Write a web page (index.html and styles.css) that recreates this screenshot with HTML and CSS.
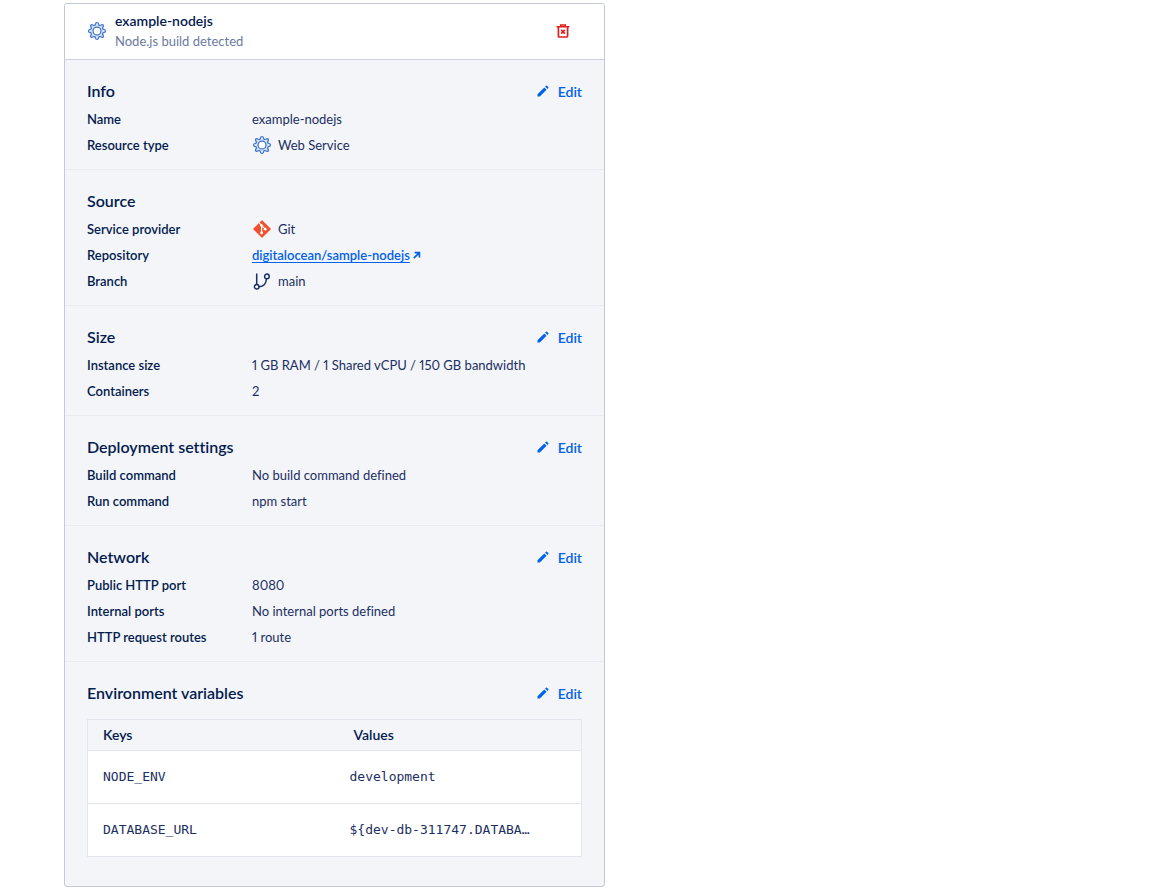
FILE: index.html
```html
<!DOCTYPE html>
<html lang="en">
<head>
    <meta charset="UTF-8">
    <meta name="viewport" content="width=device-width, initial-scale=1.0">
    <title>example-nodejs</title>
    <link rel="stylesheet" href="styles.css">
</head>
<body>
    <!-- Shared icons -->
    <svg class="sprite" aria-hidden="true">
        <symbol id="icon-gear" viewBox="-0.6 -0.6 21.2 21.2">
            <path d="M8.4 2.4Q8.7 1 10 1t1.6 1.4l.4 1.3 1.3.5 1.2-.6q1.2-.8 2 0t0 2l-.7 1.2.5 1.2 1.3.4Q19 8.700 19 10t-1.4 1.6l-1.3.4-.5 1.3.7 1.1q.8 1.200 0 2t-2 0l-1.200-.6-1.300.5-.4 1.300Q11.300 19 10 19t-1.600-1.400L8 16.300l-1.300-.5-1.200.6q-1.200.8-2 0t0-2l.7-1.100-.5-1.300-1.300-.4Q1 11.300 1 10t1.400-1.600L3.700 8l.5-1.200-.7-1.200q-.8-1.200 0-2t2 0l1.200.6L8 3.700z" fill="#d3e3fb" stroke="#3f72c4" stroke-width="1.300" stroke-linejoin="round"/>
            <circle cx="10" cy="10" r="4.200" fill="#fff" stroke="#3f72c4" stroke-width="1.300"/>
        </symbol>
        <symbol id="icon-pencil" viewBox="0 0 12 12">
            <path d="M.5 9.2 7.3 2.4l2.3 2.3-6.8 6.8H.5z" fill="currentColor"/>
            <path d="m8.1 1.6.9-.9q.5-.4 1 0l1.3 1.3q.4.5 0 1l-.9.9z" fill="currentColor"/>
        </symbol>
    </svg>

    <main class="card">
        <header class="card-header">
            <svg class="icon"><use href="#icon-gear"/></svg>
            <div class="card-title">
                <h1>example-nodejs</h1>
                <p>Node.js build detected</p>
            </div>
            <button type="button" class="delete-btn" aria-label="Delete">
                <svg viewBox="0 0 14 14" fill="none" stroke="currentColor">
                    <path d="M.6 2.7h12.8M4.7 2.4V1h4.6v1.4" stroke-width="1.5"/>
                    <path d="M2.4 3v9q0 1 1 1h7.2q1 0 1-1V3" stroke-width="1.7"/>
                    <path d="m5.2 5.9 3.6 3.8M8.8 5.9 5.2 9.7" stroke-width="1.7"/>
                </svg>
            </button>
        </header>

        <section class="section">
            <div class="section-header">
                <h2>Info</h2>
                <button type="button" class="edit-btn"><svg><use href="#icon-pencil"/></svg>Edit</button>
            </div>
            <dl>
                <div class="row"><dt>Name</dt><dd>example-nodejs</dd></div>
                <div class="row"><dt>Resource type</dt><dd><svg class="icon"><use href="#icon-gear"/></svg>Web Service</dd></div>
            </dl>
        </section>

        <section class="section">
            <div class="section-header">
                <h2>Source</h2>
            </div>
            <dl>
                <div class="row">
                    <dt>Service provider</dt>
                    <dd>
                        <svg class="icon" viewBox="0 0 20 20">
                            <rect x="3.6" y="3.6" width="12.8" height="12.8" rx="1" transform="rotate(45 10 10)" fill="#f1502f"/>
                            <path d="M7 3.6 9.6 6.4V14M9.6 6.4l3.6 3.8" fill="none" stroke="#fff" stroke-width="1.2"/>
                            <circle cx="9.6" cy="6.6" r="1.4" fill="#fff"/>
                            <circle cx="9.6" cy="14" r="1.4" fill="#fff"/>
                            <circle cx="13.2" cy="10.2" r="1.4" fill="#fff"/>
                        </svg>
                        Git
                    </dd>
                </div>
                <div class="row">
                    <dt>Repository</dt>
                    <dd>
                        <a href="#" class="repo-link">digitalocean/sample-nodejs</a>
                        <svg class="external" viewBox="0 0 8 8" fill="none" stroke="currentColor" stroke-width="1.7">
                            <path d="M1.6 1.6h4.8v4.8M6.2 1.8.8 7.2"/>
                        </svg>
                    </dd>
                </div>
                <div class="row">
                    <dt>Branch</dt>
                    <dd>
                        <svg class="icon" viewBox="0 0 20 20" fill="none" stroke="#1b2f63" stroke-width="1.5">
                            <path d="M4.7 2.5v10.9M7.2 15.8c4.6-.3 7-3.6 7.3-8"/>
                            <circle cx="4.7" cy="15.7" r="2.3"/>
                            <circle cx="14.9" cy="5.4" r="2.3"/>
                        </svg>
                        main
                    </dd>
                </div>
            </dl>
        </section>

        <section class="section">
            <div class="section-header">
                <h2>Size</h2>
                <button type="button" class="edit-btn"><svg><use href="#icon-pencil"/></svg>Edit</button>
            </div>
            <dl>
                <div class="row"><dt>Instance size</dt><dd>1 GB RAM / 1 Shared vCPU / 150 GB bandwidth</dd></div>
                <div class="row"><dt>Containers</dt><dd>2</dd></div>
            </dl>
        </section>

        <section class="section">
            <div class="section-header">
                <h2>Deployment settings</h2>
                <button type="button" class="edit-btn"><svg><use href="#icon-pencil"/></svg>Edit</button>
            </div>
            <dl>
                <div class="row"><dt>Build command</dt><dd>No build command defined</dd></div>
                <div class="row"><dt>Run command</dt><dd>npm start</dd></div>
            </dl>
        </section>

        <section class="section">
            <div class="section-header">
                <h2>Network</h2>
                <button type="button" class="edit-btn"><svg><use href="#icon-pencil"/></svg>Edit</button>
            </div>
            <dl>
                <div class="row"><dt>Public HTTP port</dt><dd>8080</dd></div>
                <div class="row"><dt>Internal ports</dt><dd>No internal ports defined</dd></div>
                <div class="row"><dt>HTTP request routes</dt><dd>1 route</dd></div>
            </dl>
        </section>

        <section class="section">
            <div class="section-header">
                <h2>Environment variables</h2>
                <button type="button" class="edit-btn"><svg><use href="#icon-pencil"/></svg>Edit</button>
            </div>
            <table class="env-table">
                <thead>
                    <tr><th>Keys</th><th>Values</th></tr>
                </thead>
                <tbody>
                    <tr><td>NODE_ENV</td><td>development</td></tr>
                    <tr><td>DATABASE_URL</td><td>${dev-db-311747.DATABA…</td></tr>
                </tbody>
            </table>
        </section>
    </main>
</body>
</html>
```
FILE: styles.css
```css
* {
    box-sizing: border-box;
    margin: 0;
    padding: 0;
}

body {
    padding: 3px 64px;
    background: #fff;
    color: #1b2f63;
    font-family: Lato, "Liberation Sans", sans-serif;
    font-size: 13px;
    font-variant-numeric: proportional-nums;
    font-variant-ligatures: none;
    line-height: 20px;
}

button {
    border: none;
    background: none;
    font-family: inherit;
    cursor: pointer;
}

.sprite {
    display: none;
}

.icon {
    flex: none;
    width: 20px;
    height: 20px;
}

.card {
    max-width: 541px;
    border: 1px solid #c4c8dc;
    border-radius: 3px;
    background: #f3f5f9;
    overflow: hidden;
}

/* Header */
.card-header {
    display: flex;
    align-items: center;
    gap: 8px;
    padding: 7px 34px 8px 22px;
    background: #fff;
    border-bottom: 1px solid #cdd0e2;
}

.card-title {
    flex: 1;
}

.card-title h1 {
    font-size: 14px;
    font-weight: 600;
    color: #031b4e;
}

.card-title p {
    color: #6b7a9f;
}

.delete-btn {
    display: flex;
    color: #dd1f1f;
}

.delete-btn svg {
    width: 14px;
    height: 14px;
}

/* Sections */
.section {
    padding: 19px 22px 11px;
    border-bottom: 1px solid #e9ebf1;
}

.section:last-child {
    padding-bottom: 29px;
    border-bottom: none;
}

.section-header {
    display: flex;
    align-items: center;
    justify-content: space-between;
    height: 24px;
    margin-bottom: 3px;
}

.section-header h2 {
    font-size: 16px;
    font-weight: 600;
    color: #031b4e;
}

.edit-btn {
    display: flex;
    align-items: center;
    gap: 9px;
    font-size: 14px;
    font-weight: 600;
    color: #0061eb;
}

.edit-btn svg {
    width: 12px;
    height: 12px;
}

.row {
    display: flex;
    align-items: center;
    height: 26px;
}

.row dt {
    flex: none;
    width: 165px;
    font-weight: 600;
    color: #031b4e;
}

.row dd {
    display: flex;
    align-items: center;
    gap: 6px;
}

.repo-link {
    font-weight: 600;
    color: #0061eb;
    text-underline-offset: 2px;
}

.external {
    width: 8px;
    height: 8px;
    margin-left: -3px;
    color: #0061eb;
}

/* Environment variables */
.env-table {
    width: 100%;
    margin-top: 14px;
    border-collapse: collapse;
    table-layout: fixed;
    border: 1px solid #e3e6ee;
    background: #fff;
}

.env-table th {
    height: 31px;
    padding: 0 19px;
    background: #f3f5f9;
    text-align: left;
    font-size: 14px;
    font-weight: 600;
    color: #031b4e;
}

.env-table th:first-child {
    padding-left: 15px;
}

.env-table td {
    height: 53px;
    padding: 0 15px;
    border-top: 1px solid #e3e6ee;
    font-family: "DejaVu Sans Mono", monospace;
    font-size: 13px;
}
```
